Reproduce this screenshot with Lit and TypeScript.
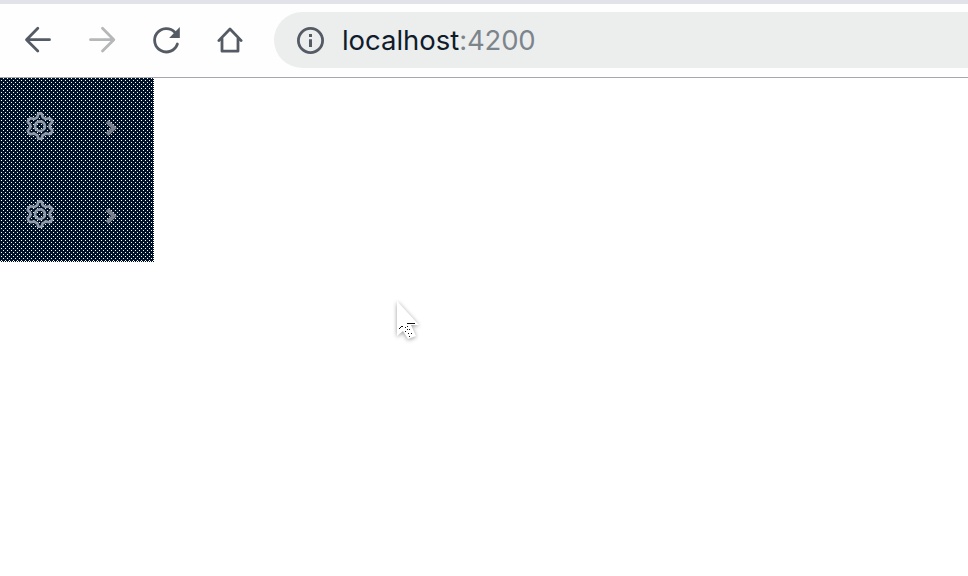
import { LitElement, html, css, svg } from "lit";
import { customElement } from "lit/decorators.js";

const gear = svg`
  <path d="M12.2 2Q14 .6 15.8 2L16.7 5.2Q18.2 6 19.6 7L23.4 6.2Q25.8 7.2 26.3 10L23.8 12.6V15.8L26.3 18.4Q25.8 21 23.4 22.2L19.6 21.4Q18.2 22.6 16.7 23.2L15.8 26.4Q14 27.8 12.2 26.4L11.3 23.2Q9.8 22.6 8.4 21.4L4.6 22.2Q2.2 21 1.7 18.4L4.2 15.8V12.6L1.7 10Q2.2 7.2 4.6 6.2L8.4 7Q9.8 6 11.3 5.2Z"/>
  <circle cx="14" cy="14.2" r="4.9"/>`;

@customElement("browser-toolbar")
class BrowserToolbar extends LitElement {
  static styles = css`
    :host { display: flex; box-sizing: border-box; height: 78px; padding-top: 8px; border-top: 4px solid #e2e3e9; border-bottom: 1px solid #a5a7aa; background: #fefefe; }
    .nav { display: flex; gap: 32px; padding: 12px 0 0 22px; width: 252px; flex: none; }
    svg { display: block; width: 32px; height: 32px; flex: none; fill: none; stroke: #555b65; stroke-width: 2.8; stroke-linecap: round; stroke-linejoin: round; }
    .disabled { stroke: #b5b7b9; }
    .solid { fill: #555b65; stroke: none; }
    .address { display: flex; align-items: center; flex: 1; height: 56px; box-sizing: border-box; padding-left: 20px; border-radius: 28px 0 0 28px; background: #eceeee; }
    .url { margin-left: 16px; font: 27.5px/56px Inter, sans-serif; letter-spacing: -0.04px; color: #101b2b; white-space: nowrap; }
    .port { color: #7d858c; letter-spacing: -0.15px; }
  `;
  render() {
    return html`
      <div class="nav">
        <svg viewBox="0 0 32 32"><path d="M27.5 15.7H4.8M15.8 4.3L4.5 15.7L15.8 27"/></svg>
        <svg class="disabled" viewBox="0 0 32 32"><path d="M4.5 15.7H27.5M16.5 4.3L27.8 15.7L16.5 27"/></svg>
        <svg viewBox="0 0 32 32"><path d="M24.8 8.2A11.7 11.7 0 1 0 27.4 20"/><path class="solid" d="M29.8 3V14H19.2Z"/></svg>
        <svg viewBox="0 0 32 32"><path d="M4.8 16.6L16 5L27.2 16.6M8 14.4V27.2H24V14.4"/></svg>
      </div>
      <div class="address">
        <svg viewBox="0 0 32 32"><circle cx="16.5" cy="16.5" r="12.1"/><path class="solid" d="M15 10H18V13H15ZM15 15.2H18V23H15Z"/></svg>
        <span class="url">localhost<span class="port">:4200</span></span>
      </div>`;
  }
}

@customElement("side-menu")
class SideMenu extends LitElement {
  static styles = css`
    :host { display: grid; width: 154px; height: 184px; background: #00122a; }
    .dots, .items { grid-area: 1 / 1; }
    .dots { display: block; width: 154px; height: 184px; }
    .items { display: flex; flex-direction: column; z-index: 1; padding-top: 4px; }
    .item { display: flex; align-items: center; height: 88px; padding-left: 26px; }
    .gear { width: 28px; height: 28px; fill: none; stroke: #929baa; stroke-width: 2.7; stroke-linejoin: round; }
    .chevron { width: 14px; height: 18px; margin: 3px 0 0 50px; fill: none; stroke: #7c838e; stroke-width: 4; }
  `;
  render() {
    const item = html`<div class="item">
      <svg class="gear" viewBox="0 0 28 28">${gear}</svg>
      <svg class="chevron" viewBox="0 0 14 18"><path d="M3 2.5L10 9L3 15.5"/></svg>
    </div>`;
    return html`
      <svg class="dots" shape-rendering="crispEdges">
        <defs><pattern id="weave" width="4" height="4" patternUnits="userSpaceOnUse"><path fill="#fff" d="M1 2h1v1h-1ZM3 0h1v1h-1Z"/></pattern></defs>
        <rect width="154" height="184" fill="url(#weave)"/>
        <path stroke="#fff" stroke-dasharray="1 1" d="M0 183.5H154M153.5 0V184"/>
      </svg>
      <div class="items">${item}${item}</div>`;
  }
}

@customElement("app-root")
class AppRoot extends LitElement {
  static styles = css`
    :host { display: block; position: relative; height: 576px; overflow: hidden; background: #fff; }
    .pointer { position: absolute; left: 388px; top: 294px; width: 40px; height: 52px; filter: drop-shadow(0 1px 2px #0006); }
  `;
  render() {
    return html`
      <browser-toolbar></browser-toolbar>
      <side-menu></side-menu>
      <svg class="pointer" viewBox="0 0 40 52">
        <path fill="#fff" d="M9 7L31 31H23L28 42L20 45L15 37L9 42Z"/>
        <g shape-rendering="crispEdges" fill="#111">
          <path d="M19 29h8v1h-8ZM14 32h1v1h-1ZM13 32h1v1h-1ZM12 33h1v1h-1ZM11 34h1v1h-1ZM17 33h1v1h-1ZM19 35h1v1h-1ZM17 37h1v1h-1ZM21 35h1v1h-1ZM20 39h1v1h-1ZM23 39h1v1h-1ZM21 42h1v1h-1ZM19 32h1v1h-1Z"/>
        </g>
      </svg>`;
  }
}
